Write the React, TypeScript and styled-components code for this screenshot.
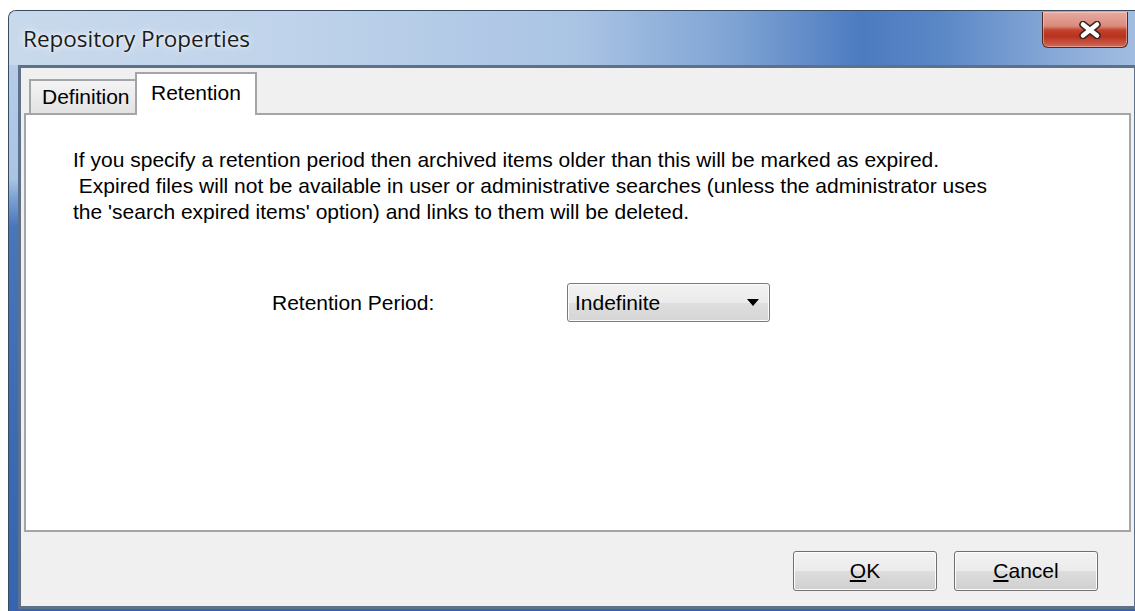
import styled, { createGlobalStyle } from 'styled-components'

const GlobalStyle = createGlobalStyle`
  html, body, #root {
    margin: 0;
    padding: 0;
    background: #ffffff;
    overflow: hidden;
  }
  body {
    width: 1135px;
    height: 611px;
  }
`

const Window = styled.div`
  margin: 10px 0 0 8px;
  width: 1137px;
  height: 601px;
  box-sizing: border-box;
  display: flex;
  flex-direction: column;
  border: 1px solid #3a4a60;
  border-right: none;
  border-bottom: none;
  border-top-left-radius: 8px;
  overflow: hidden;
  background: linear-gradient(180deg, #bcd1ea 0%, #aac4e4 28%, #7fa3d4 31%, #4776bc 36%, #3b6bb3 70%, #3565b0 100%);
`

const TitleBar = styled.div`
  height: 54px;
  flex-shrink: 0;
  display: flex;
  align-items: flex-start;
  padding-left: 14px;
  box-sizing: border-box;
  background: linear-gradient(90deg, #c9d9ec 0%, #bfd3ea 25%, #aac4e4 50%, #7ea3d4 64%, #4c7bc0 75%, #5a87c6 82%, #87a8d7 92%, #a5c0e2 100%);
`

const Title = styled.div`
  padding-top: 12px;
  font-family: 'Open Sans', 'Noto Sans', sans-serif;
  font-size: 22.5px;
  color: #1b1b1b;
  text-shadow: 0 0 8px rgba(255, 255, 255, 0.9), 0 0 3px rgba(255, 255, 255, 0.8);
`

const CloseButton = styled.div`
  margin: 1px 17px 0 auto;
  width: 86px;
  height: 36px;
  box-sizing: border-box;
  display: flex;
  align-items: center;
  justify-content: center;
  padding-left: 10px;
  border: 1px solid #4e2a25;
  border-top: none;
  border-radius: 0 0 6px 6px;
  background: linear-gradient(180deg, #e7aaa0 0%, #d98c7e 40%, #c4412b 52%, #b8321d 70%, #cf6a58 100%);
  box-shadow: inset 0 0 0 1px rgba(255, 220, 210, 0.45);
`

const Client = styled.div`
  flex: 1;
  margin: 0 8px 2px 9px;
  display: flex;
  flex-direction: column;
  padding: 4px 3px 15px 3px;
  border: 3px solid #5f7089;
  background: #f0f0f0;
  font-family: 'Liberation Sans', Arial, sans-serif;
  font-size: 21px;
  color: #000;
`

const TabStrip = styled.div`
  display: flex;
  align-items: flex-end;
  padding-left: 5px;
`

const Tab = styled.div<{ $active?: boolean }>`
  box-sizing: border-box;
  height: ${(p) => (p.$active ? '43px' : '34px')};
  width: ${(p) => (p.$active ? '122px' : '108px')};
  margin-bottom: ${(p) => (p.$active ? '-2px' : '0')};
  margin-left: ${(p) => (p.$active ? '-2px' : '0')};
  padding: ${(p) => (p.$active ? '7px 0 0 14px' : '4px 0 0 11px')};
  line-height: 24px;
  border: 2px solid #a3a5ab;
  border-bottom: none;
  position: relative;
  z-index: ${(p) => (p.$active ? 1 : 0)};
  background: ${(p) => (p.$active ? '#ffffff' : 'linear-gradient(180deg, #f3f3f3 0%, #ebebeb 50%, #e2e2e2 100%)')};
`

const Page = styled.div`
  flex: 1;
  box-sizing: border-box;
  border: 2px solid #a3a5ab;
  background: #ffffff;
  padding: 32px 0 0 47px;
`

const Notice = styled.div`
  line-height: 26px;
`

const Line = styled.span`
  display: block;
  white-space: pre;
`

const FieldRow = styled.div`
  display: flex;
  align-items: center;
  margin-top: 58px;
  padding-left: 199px;
`

const FieldLabel = styled.div`
  width: 295px;
`

const Combo = styled.div`
  width: 203px;
  height: 39px;
  box-sizing: border-box;
  display: flex;
  align-items: center;
  justify-content: space-between;
  padding: 0 10px 0 7px;
  border: 1px solid #7a7a7a;
  border-radius: 3px;
  background: linear-gradient(180deg, #f2f2f2 0%, #ebebeb 50%, #dfdfdf 51%, #d5d5d5 100%);
  box-shadow: inset 0 0 0 1px #fbfbfb;
`

const Arrow = styled.span`
  width: 0;
  height: 0;
  border-left: 6px solid transparent;
  border-right: 6px solid transparent;
  border-top: 7px solid #000;
`

const ButtonRow = styled.div`
  display: flex;
  justify-content: flex-end;
  gap: 17px;
  margin-top: 19px;
  padding-right: 33px;
`

const Button = styled.div`
  width: 144px;
  height: 40px;
  box-sizing: border-box;
  display: flex;
  align-items: center;
  justify-content: center;
  border: 1px solid #707070;
  border-radius: 3px;
  background: linear-gradient(180deg, #f2f2f2 0%, #ebebeb 50%, #dddddd 51%, #cfcfcf 100%);
  box-shadow: inset 0 0 0 1px #fcfcfc;
`

const CloseGlyph = () => (
  <svg width="26" height="18" viewBox="0 0 26 18">
    <path d="M6 3.5 L20 14.5 M20 3.5 L6 14.5" stroke="#3b2522" strokeWidth="7.5" strokeLinecap="round" />
    <path d="M6 3.5 L20 14.5 M20 3.5 L6 14.5" stroke="#ffffff" strokeWidth="4.5" strokeLinecap="round" />
  </svg>
)

export default function App() {
  return (
    <>
      <GlobalStyle />
      <Window>
        <TitleBar>
          <Title>Repository Properties</Title>
          <CloseButton>
            <CloseGlyph />
          </CloseButton>
        </TitleBar>
        <Client>
          <TabStrip>
            <Tab>Definition</Tab>
            <Tab $active>Retention</Tab>
          </TabStrip>
          <Page>
            <Notice>
              <Line>If you specify a retention period then archived items older than this will be marked as expired.</Line>
              <Line> Expired files will not be available in user or administrative searches (unless the administrator uses</Line>
              <Line>the 'search expired items' option) and links to them will be deleted.</Line>
            </Notice>
            <FieldRow>
              <FieldLabel>Retention Period:</FieldLabel>
              <Combo>
                <span>Indefinite</span>
                <Arrow />
              </Combo>
            </FieldRow>
          </Page>
          <ButtonRow>
            <Button>
              <span><u>O</u>K</span>
            </Button>
            <Button>
              <span><u>C</u>ancel</span>
            </Button>
          </ButtonRow>
        </Client>
      </Window>
    </>
  )
}
